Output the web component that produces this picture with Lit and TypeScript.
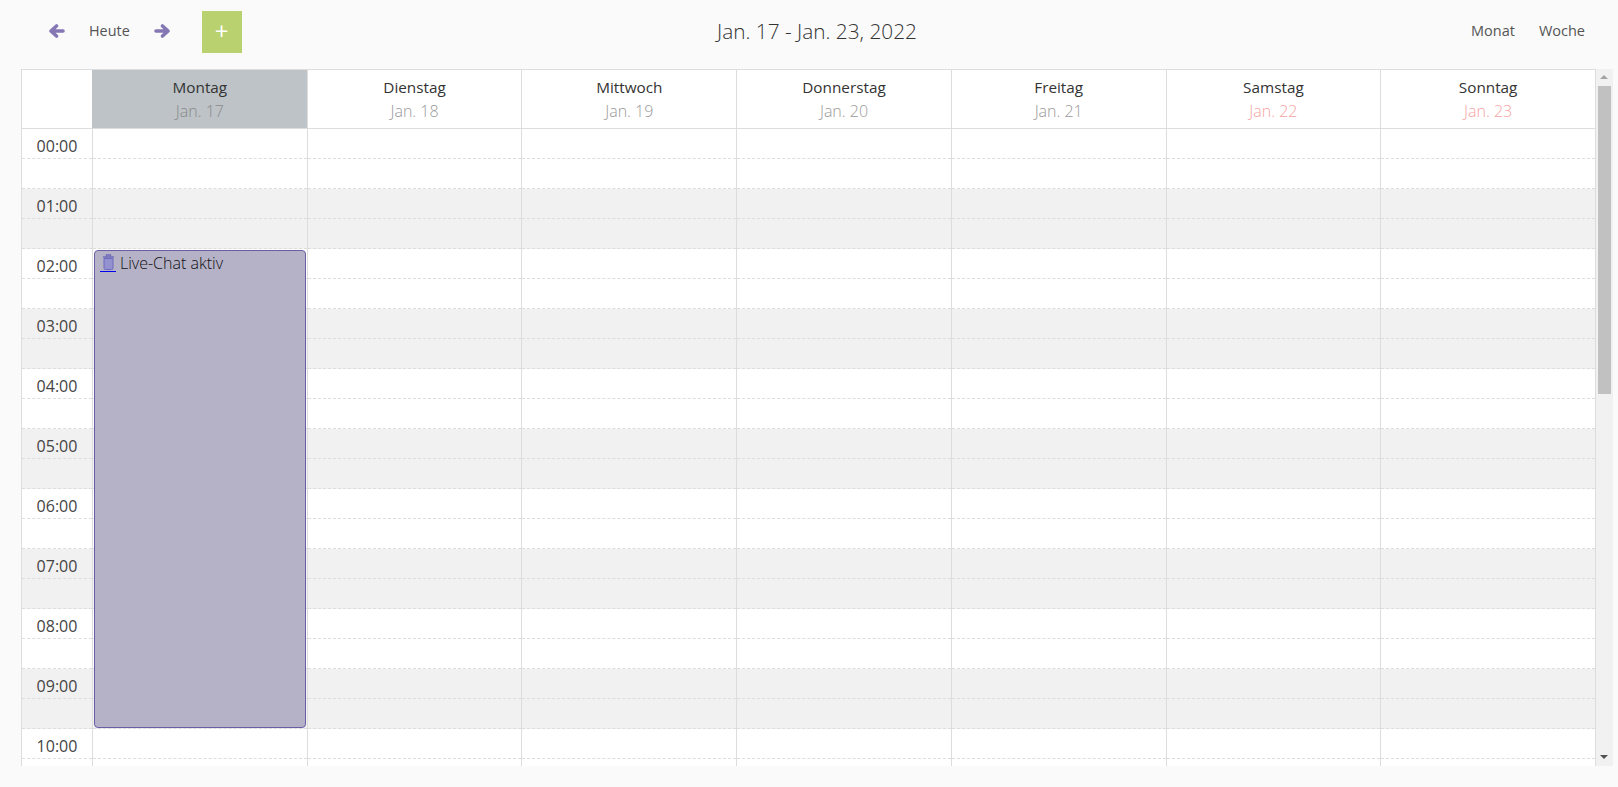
import { css, html, LitElement } from "lit";
import { customElement } from "lit/decorators.js";

const DAYS = [
  { name: "Montag", date: "Jan. 17", today: true },
  { name: "Dienstag", date: "Jan. 18" },
  { name: "Mittwoch", date: "Jan. 19" },
  { name: "Donnerstag", date: "Jan. 20" },
  { name: "Freitag", date: "Jan. 21" },
  { name: "Samstag", date: "Jan. 22", weekend: true },
  { name: "Sonntag", date: "Jan. 23", weekend: true },
];

const HOURS = Array.from({ length: 11 }, (_, i) => String(i).padStart(2, "0") + ":00");

// one slot is half an hour
const SLOT = 30;

@customElement("app-root")
export class AppRoot extends LitElement {
  static styles = css`
    :host {
      display: block;
      height: 787px;
      overflow: hidden;
      background: #fafafa;
      font-family: "Open Sans", sans-serif;
      color: #333;
    }

    .toolbar {
      height: 69px;
      padding: 11px 33px 0 49px;
      box-sizing: border-box;
      display: grid;
      grid-template-columns: 1fr auto 1fr;
      align-items: start;
    }

    .toolbar-left {
      display: flex;
      align-items: center;
      height: 42px;
    }

    .arrow {
      width: 16px;
      height: 14px;
      margin-bottom: 3px;
      display: block;
      fill: none;
      stroke: #8577b3;
      stroke-width: 3.6;
      stroke-linecap: round;
      stroke-linejoin: round;
    }

    .today {
      margin: 0 24px 3px;
      font-size: 14.4px;
      color: #555;
    }

    .add {
      margin-left: 32px;
      width: 40px;
      height: 42px;
      background: #b9d16f;
      color: #fff;
      display: flex;
      align-items: center;
      justify-content: center;
      font-size: 24px;
      line-height: 1;
      padding-bottom: 3px;
      box-sizing: border-box;
    }

    .title {
      font-size: 20.8px;
      font-weight: 300;
      line-height: 40px;
      color: #333;
    }

    .toolbar-right {
      display: flex;
      justify-content: flex-end;
      gap: 24px;
      height: 39px;
      align-items: center;
      font-size: 14.5px;
      color: #555;
    }

    .calendar {
      margin: 0 5px 0 21px;
      height: 697px;
      display: flex;
    }

    .grid {
      flex: 1;
      min-width: 0;
      overflow: hidden;
      background: #fff;
      border-top: 1px solid #ddd;
      border-left: 1px solid #ddd;
      border-right: 1px solid #ddd;
    }

    .row {
      display: grid;
      grid-template-columns: 70px repeat(7, 1fr);
    }

    .head {
      height: 59px;
      box-sizing: border-box;
      border-bottom: 1px solid #ddd;
    }

    .head-cell {
      border-left: 1px solid #ddd;
      text-align: center;
      padding-top: 5px;
      font-size: 15.3px;
      line-height: 24px;
      color: #333;
    }

    .head-cell.current {
      background: #bdc3c7;
      border-left-color: #bdc3c7;
    }

    .corner {
      border-left: none;
    }

    .head-date {
      display: block;
      font-size: 16px;
      font-weight: 300;
      color: #999;
    }

    .current .head-date {
      color: #8a8a8a;
    }

    .weekend .head-date {
      color: #f5a3a3;
    }

    .hour.odd {
      background: #f1f1f1;
    }

    .time {
      font-size: 16px;
      line-height: 35px;
      text-align: center;
      color: #444;
    }

    .slot {
      height: 30px;
      box-sizing: border-box;
      border-bottom: 1px dashed #ddd;
    }

    .cell {
      position: relative;
      border-left: 1px solid #ddd;
    }

    .event {
      position: absolute;
      z-index: 1;
      top: 1px;
      left: 1px;
      right: 1px;
      box-sizing: border-box;
      background: #b5b2c8;
      border: 1px solid #6a5fa5;
      border-radius: 4px;
      padding: 3px 5px;
      display: flex;
      align-items: flex-start;
      gap: 4px;
      font-size: 16px;
      font-weight: 300;
      line-height: 18px;
      color: #111;
    }

    .event a {
      display: block;
      width: 16px;
      height: 17px;
      border-bottom: 1px solid #00e;
    }

    .event svg {
      display: block;
      width: 13px;
      height: 16px;
      margin: 0 1.5px;
    }

    .scrollbar {
      width: 17px;
      background: #f1f1f1;
      position: relative;
      flex: none;
    }

    .scroll-up,
    .scroll-down {
      position: absolute;
      left: 4px;
      width: 0;
      height: 0;
      border-left: 4px solid transparent;
      border-right: 4px solid transparent;
    }

    .scroll-up {
      top: 6px;
      border-bottom: 4px solid #a3a3a3;
    }

    .scroll-down {
      bottom: 7px;
      border-top: 4px solid #505050;
    }

    .thumb {
      position: absolute;
      top: 17px;
      left: 2px;
      width: 13px;
      height: 308px;
      background: #c1c1c1;
    }
  `;

  private renderEvent() {
    return html`
      <div class="event" style="height: ${SLOT * 16 - 2}px">
        <a>
          <svg viewBox="0 0 13 16">
            <path d="M1 3 H12 M4.5 2.5 V1 H8.5 V2.5" fill="none" stroke="#6f6bbd" stroke-width="1.4"></path>
            <path d="M2 4.5 H11 V14 A1.5 1.5 0 0 1 9.5 15.5 H3.5 A1.5 1.5 0 0 1 2 14 Z" fill="#9391cf" stroke="#6f6bbd"></path>
          </svg>
        </a>
        <span>Live-Chat aktiv</span>
      </div>
    `;
  }

  private renderHour(label: string, index: number) {
    return html`
      <div class="row hour ${index % 2 ? "odd" : ""}">
        <div class="time-cell">
          <div class="slot time">${label}</div>
          <div class="slot"></div>
        </div>
        ${DAYS.map((_, day) => html`
          <div class="cell">
            <div class="slot"></div>
            <div class="slot"></div>
            ${day === 0 && index === 2 ? this.renderEvent() : ""}
          </div>
        `)}
      </div>
    `;
  }

  render() {
    return html`
      <div class="toolbar">
        <div class="toolbar-left">
          <svg class="arrow" viewBox="0 0 16 14"><path d="M14 7 H2.5 M7.5 2 L2 7 L7.5 12"></path></svg>
          <span class="today">Heute</span>
          <svg class="arrow" viewBox="0 0 16 14"><path d="M2 7 H13.5 M8.5 2 L14 7 L8.5 12"></path></svg>
          <div class="add">+</div>
        </div>
        <div class="title">Jan. 17 - Jan. 23, 2022</div>
        <div class="toolbar-right">
          <span>Monat</span>
          <span>Woche</span>
        </div>
      </div>
      <div class="calendar">
        <div class="grid">
          <div class="row head">
            <div class="head-cell corner"></div>
            ${DAYS.map(d => html`
              <div class="head-cell ${d.today ? "current" : ""} ${d.weekend ? "weekend" : ""}">
                ${d.name}
                <span class="head-date">${d.date}</span>
              </div>
            `)}
          </div>
          ${HOURS.map((h, i) => this.renderHour(h, i))}
        </div>
        <div class="scrollbar">
          <div class="scroll-up"></div>
          <div class="thumb"></div>
          <div class="scroll-down"></div>
        </div>
      </div>
    `;
  }
}
